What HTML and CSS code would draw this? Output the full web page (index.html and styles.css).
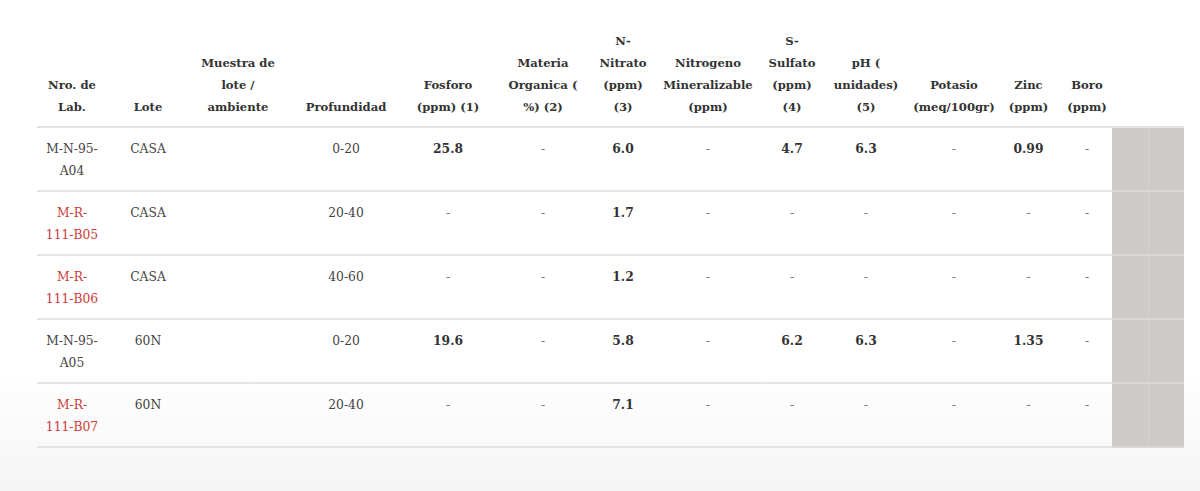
FILE: index.html
```html
<!DOCTYPE html>
<html lang="es">
<head>
<meta charset="utf-8">
<title>Resultados de análisis</title>
<link rel="stylesheet" href="styles.css">
</head>
<body>
<main class="page">
  <table class="results">
    <colgroup>
      <col class="c-lab"><col class="c-lote"><col class="c-muestra"><col class="c-prof">
      <col class="c-fos"><col class="c-mo"><col class="c-nit"><col class="c-nmin">
      <col class="c-sul"><col class="c-ph"><col class="c-pot"><col class="c-zn">
      <col class="c-bo"><col class="c-x"><col class="c-x">
    </colgroup>
    <thead>
      <tr>
        <th>Nro. de<br>Lab.</th>
        <th>Lote</th>
        <th>Muestra de<br>lote /<br>ambiente</th>
        <th>Profundidad</th>
        <th>Fosforo<br>(ppm) (1)</th>
        <th>Materia<br>Organica (<br>%) (2)</th>
        <th>N-<br>Nitrato<br>(ppm)<br>(3)</th>
        <th>Nitrogeno<br>Mineralizable<br>(ppm)</th>
        <th>S-<br>Sulfato<br>(ppm)<br>(4)</th>
        <th>pH (<br>unidades)<br>(5)</th>
        <th>Potasio<br>(meq/100gr)</th>
        <th>Zinc<br>(ppm)</th>
        <th>Boro<br>(ppm)</th>
        <th class="blank"></th>
        <th class="blank"></th>
      </tr>
    </thead>
    <tbody>
      <tr>
        <td>M-N-95-<br>A04</td><td>CASA</td><td></td><td>0-20</td>
        <td class="num">25.8</td><td class="dash">-</td><td class="num">6.0</td><td class="dash">-</td>
        <td class="num">4.7</td><td class="num">6.3</td><td class="dash">-</td><td class="num">0.99</td><td class="dash">-</td>
        <td class="grey"></td><td class="grey"></td>
      </tr>
      <tr>
        <td class="red">M-R-<br>111-B05</td><td>CASA</td><td></td><td>20-40</td>
        <td class="dash">-</td><td class="dash">-</td><td class="num">1.7</td><td class="dash">-</td>
        <td class="dash">-</td><td class="dash">-</td><td class="dash">-</td><td class="dash">-</td><td class="dash">-</td>
        <td class="grey"></td><td class="grey"></td>
      </tr>
      <tr>
        <td class="red">M-R-<br>111-B06</td><td>CASA</td><td></td><td>40-60</td>
        <td class="dash">-</td><td class="dash">-</td><td class="num">1.2</td><td class="dash">-</td>
        <td class="dash">-</td><td class="dash">-</td><td class="dash">-</td><td class="dash">-</td><td class="dash">-</td>
        <td class="grey"></td><td class="grey"></td>
      </tr>
      <tr>
        <td>M-N-95-<br>A05</td><td>60N</td><td></td><td>0-20</td>
        <td class="num">19.6</td><td class="dash">-</td><td class="num">5.8</td><td class="dash">-</td>
        <td class="num">6.2</td><td class="num">6.3</td><td class="dash">-</td><td class="num">1.35</td><td class="dash">-</td>
        <td class="grey"></td><td class="grey"></td>
      </tr>
      <tr>
        <td class="red">M-R-<br>111-B07</td><td>60N</td><td></td><td>20-40</td>
        <td class="dash">-</td><td class="dash">-</td><td class="num">7.1</td><td class="dash">-</td>
        <td class="dash">-</td><td class="dash">-</td><td class="dash">-</td><td class="dash">-</td><td class="dash">-</td>
        <td class="grey"></td><td class="grey"></td>
      </tr>
    </tbody>
  </table>
</main>
</body>
</html>
```
FILE: styles.css
```css
html, body {
  margin: 0;
  height: 100%;
}
body {
  background: linear-gradient(to bottom, #ffffff 0px, #ffffff 370px, #f5f5f5 491px);
  font-family: "DejaVu Serif", "Liberation Serif", serif;
  color: #3d3d3d;
}
.page {
  padding: 30px 0 0 37px;
}
.results {
  border-collapse: collapse;
  table-layout: fixed;
  width: 1147px;
}
.c-lab { width: 70px; }
.c-lote { width: 82px; }
.c-muestra { width: 98px; }
.c-prof { width: 118px; }
.c-fos { width: 86px; }
.c-mo { width: 104px; }
.c-nit { width: 56px; }
.c-nmin { width: 114px; }
.c-sul { width: 54px; }
.c-ph { width: 94px; }
.c-pot { width: 82px; }
.c-zn { width: 67px; }
.c-bo { width: 50px; }
.c-x { width: 36px; }

.results th {
  font-size: 11.6px;
  font-weight: bold;
  line-height: 22px;
  color: #333333;
  text-align: center;
  vertical-align: bottom;
  white-space: nowrap;
  padding: 0 0 8px;
  border-bottom: 2px solid #e2e2e2;
}
.results td {
  font-size: 12.3px;
  line-height: 22px;
  text-align: center;
  vertical-align: top;
  white-space: nowrap;
  padding: 10px 0 8px;
  height: 44px;
  border-bottom: 2px solid #e4e4e4;
  color: #444444;
}
.results td.num {
  font-weight: bold;
  color: #333333;
}
.results td.dash {
  color: #777777;
}
.results td.red {
  color: #cc3a3c;
}
.results td.grey {
  background: #cdcaca;
  border-bottom-color: #d9d7d6;
}
.results td.grey + td.grey {
  border-left: 1px solid #d6d4d3;
}
```
